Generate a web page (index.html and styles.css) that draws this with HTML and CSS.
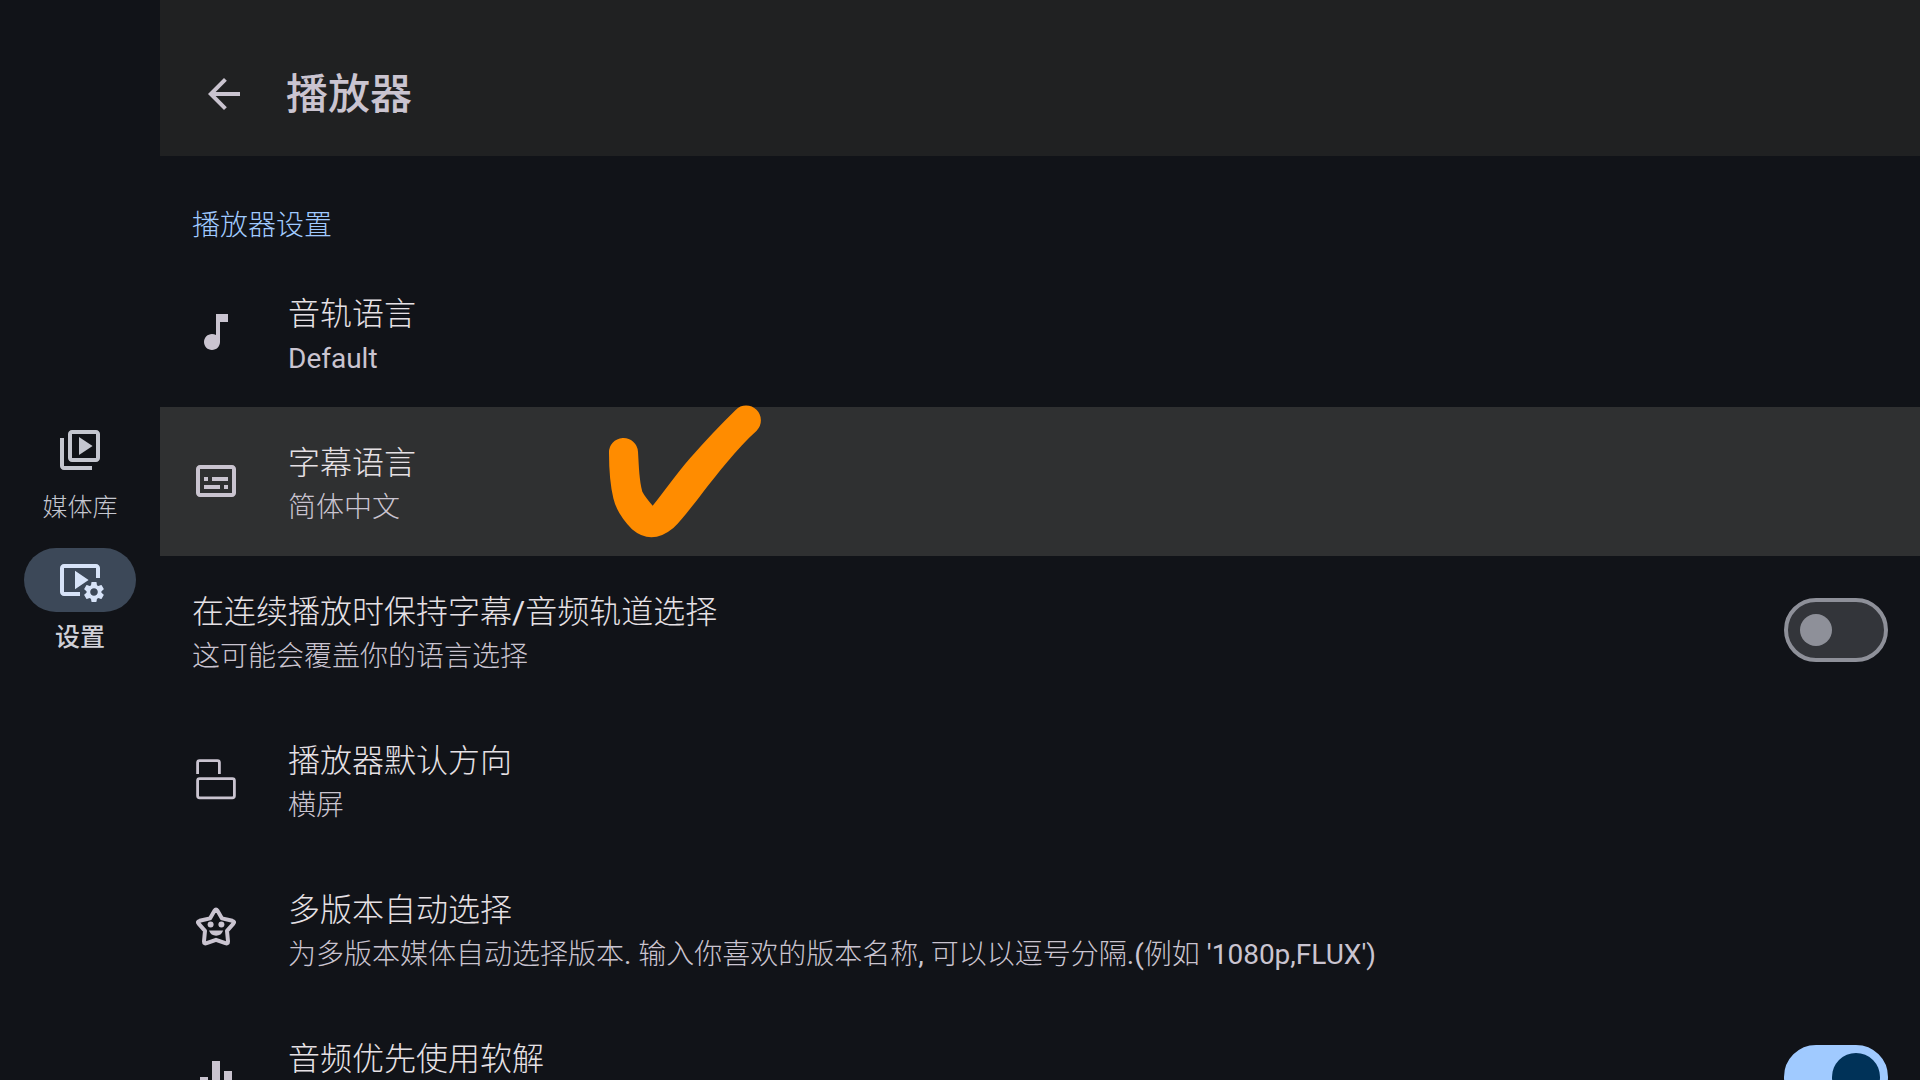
FILE: index.html
```html
<!DOCTYPE html>
<html lang="zh-CN">
<head>
    <meta charset="UTF-8">
    <meta name="viewport" content="width=device-width, initial-scale=1">
    <title>播放器</title>
    <link rel="stylesheet" href="styles.css">
</head>
<body>
<nav class="sidebar">
    <a class="nav-item" href="#library">
        <span class="nav-icon">
            <svg class="icon" viewBox="0 0 24 24"><path d="M4 6H2v14c0 1.1.9 2 2 2h14v-2H4V6zm16-4H8c-1.1 0-2 .9-2 2v12c0 1.1.9 2 2 2h12c1.1 0 2-.9 2-2V4c0-1.1-.9-2-2-2zm0 14H8V4h12v12zM11.5 5.5v9l6.8-4.5z"/></svg>
        </span>
        <span class="nav-label">媒体库</span>
    </a>
    <a class="nav-item active" href="#settings" aria-current="page">
        <span class="nav-icon">
            <svg class="icon" viewBox="0 0 24 24"><path d="M4 6h16v5h2V6c0-1.1-.9-2-2-2H4c-1.1 0-2 .9-2 2v12c0 1.1.9 2 2 2h8v-2H4V6zM16.3 12L9.5 7.4v9.2zM22.71 18.43c.03-.29.04-.58.01-.86l1.07-.85c.1-.08.12-.21.06-.32l-1.03-1.79c-.06-.11-.19-.15-.31-.11L21.23 15c-.23-.17-.48-.31-.75-.42l-.2-1.36C20.26 13.09 20.16 13 20.03 13h-2.07c-.12 0-.23.09-.25.21l-.2 1.36c-.26.11-.51.26-.74.42l-1.28-.5c-.12-.05-.25 0-.31.11l-1.03 1.79c-.06.11-.04.24.06.32l1.07.86c-.03.29-.04.58-.01.86l-1.07.85c-.1.08-.12.21-.06.32l1.03 1.79c.06.11.19.15.31.11l1.27-.5c.23.17.48.31.75.42l.2 1.36c.02.12.12.21.25.21h2.07c.12 0 .23-.09.25-.21l.2-1.36c.26-.11.51-.26.74-.42l1.28.5c.12.05.25 0 .31-.11l1.03-1.79c.06-.11.04-.24-.06-.32L22.71 18.43zM19 19.9c-1.05 0-1.9-.85-1.9-1.9s.85-1.9 1.9-1.9 1.9.85 1.9 1.9-.85 1.9-1.9 1.9z"/></svg>
        </span>
        <span class="nav-label">设置</span>
    </a>
</nav>

<main class="content">
    <header class="topbar">
        <button class="back" type="button" aria-label="返回">
            <svg class="icon" viewBox="0 0 24 24"><path d="M20 11H7.830l5.590-5.590L12 4l-8 8 8 8 1.410-1.410L7.830 13H20v-2z"/></svg>
        </button>
        <h1>播放器</h1>
    </header>

    <h2 class="section-title">播放器设置</h2>

    <button class="row" type="button">
        <svg class="icon" viewBox="0 0 24 24"><path d="M12 3v10.550c-.59-.34-1.270-.55-2-.55-2.210 0-4 1.790-4 4s1.790 4 4 4 4-1.790 4-4V7h4V3h-6z"/></svg>
        <span class="row-text">
            <span class="row-title">音轨语言</span>
            <span class="row-sub"><span class="latin">Default</span></span>
        </span>
    </button>

    <button class="row selected" type="button">
        <svg class="icon" viewBox="0 0 24 24"><path d="M20 4H4c-1.100 0-2 .9-2 2v12c0 1.100.9 2 2 2h16c1.100 0 2-.9 2-2V6c0-1.100-.9-2-2-2zm0 14H4V6h16v12zM6 10h2v2H6zM10 10h8v2h-8zM6 14h8v2H6zM16 14h2v2h-2z"/></svg>
        <span class="row-text">
            <span class="row-title">字幕语言</span>
            <span class="row-sub">简体中文</span>
        </span>
        <svg class="check" viewBox="0 0 570 480" aria-hidden="true"><path d="M57 190A43.500 43.500 0 0 1 144 185C147 235 148 270 157 305Q165 320 188 347C225 303 260 250 300 205Q370 125 437 60A42 42 0 0 1 500 122C440 175 380 255 340 305C300 357 275 390 250 414Q185 468 126 418Q80 370 70 325Q57 270 57 190Z"/></svg>
    </button>

    <label class="row">
        <span class="row-text">
            <span class="row-title">在连续播放时保持字幕<span class="latin">/</span>音频轨道选择</span>
            <span class="row-sub">这可能会覆盖你的语言选择</span>
        </span>
        <input class="switch" type="checkbox" role="switch">
    </label>

    <button class="row" type="button">
        <svg class="icon line" viewBox="0 0 24 24"><path d="M2.800 9.500V3.800q0-1 1-1h8.900q1 0 1 1v5.700"/><rect x="2.800" y="11.800" width="18.400" height="9.600" rx="1"/></svg>
        <span class="row-text">
            <span class="row-title">播放器默认方向</span>
            <span class="row-sub">横屏</span>
        </span>
    </button>

    <button class="row" type="button">
        <svg class="icon" viewBox="0 0 24 24">
            <path class="star" d="M11.300 3.300Q12 2.200 12.700 3.300L15 7.200L20.200 8.400Q21.600 8.800 20.700 9.800L17.500 13.400L18 18.700Q18 20 16.700 19.600L12 17.900L7.300 19.600Q6 20 6 18.700L6.500 13.400L3.300 9.800Q2.400 8.800 3.800 8.400L9 7.200Z"/>
            <circle cx="9.300" cy="10.300" r="1.500"/><circle cx="14.700" cy="10.300" r="1.500"/>
            <path d="M8.500 13.300h7.100q-1 2.600-3.550 2.600T8.500 13.300z"/>
        </svg>
        <span class="row-text">
            <span class="row-title">多版本自动选择</span>
            <span class="row-sub">为多版本媒体自动选择版本<span class="latin">. </span>输入你喜欢的版本名称<span class="latin">, </span>可以以逗号分隔<span class="latin">.(</span>例如<span class="latin"> '1080p,FLUX')</span></span>
        </span>
    </button>

    <label class="row">
        <svg class="icon" viewBox="0 0 24 24"><path d="M10 20h4V4h-4v16zm-6 0h4v-8H4v8zM16 9v11h4V9h-4z"/></svg>
        <span class="row-text">
            <span class="row-title">音频优先使用软解</span>
        </span>
        <input class="switch" type="checkbox" role="switch" checked>
    </label>
</main>
</body>
</html>
```

FILE: styles.css
```css
*{padding: 0;margin: 0;box-sizing: border-box;}
body{
    display: flex;
    height: 100vh;
    overflow: hidden;
    background: #111318;
    color: #e2e2e9;
    font-family: Roboto, "Noto Sans CJK SC", sans-serif;
    font-weight: 300;
}
.icon{
    width: 48px;
    height: 48px;
    flex: none;
    fill: currentColor;
}
.latin{font-weight: 400;}

/* sidebar */
.sidebar{
    display: flex;
    flex-direction: column;
    justify-content: center;
    flex: none;
    gap: 22px;
    width: 160px;
    padding-bottom: 6px;
}
.nav-item{
    display: flex;
    flex-direction: column;
    align-items: center;
    gap: 8px;
    color: #c4c6cf;
    text-decoration: none;
}
.nav-icon{
    display: flex;
    align-items: center;
    justify-content: center;
    width: 112px;
    height: 64px;
    border-radius: 32px;
}
.nav-label{
    font-size: 25px;
    line-height: 36px;
}
.nav-item.active .nav-icon{
    background: #3c4858;
    color: #d7e3f8;
}
.nav-item.active .nav-label{
    color: #d0d0d7;
    font-weight: 500;
}

/* content */
.content{
    flex: 1;
    min-width: 0;
    overflow: hidden;
}
.topbar{
    display: flex;
    align-items: center;
    gap: 38px;
    height: 156px;
    padding: 32px 40px 0;
    background: #202122;
    color: #cac4d0;
}
.back{
    display: flex;
    border: 0;
    background: none;
    color: inherit;
    cursor: pointer;
}
.topbar h1{
    padding-top: 2px;
    font-size: 42px;
    font-weight: 500;
    line-height: 56px;
}
.section-title{
    padding: 50px 32px 12px;
    color: #a0caff;
    font-size: 28px;
    font-weight: 300;
    line-height: 40px;
}
.row{
    position: relative;
    display: flex;
    align-items: center;
    gap: 48px;
    width: 100%;
    padding: 27px 32px 28px;
    border: 0;
    background: none;
    color: #cac4d0;
    font: inherit;
    text-align: left;
    cursor: pointer;
}
.row.selected{background: #2f3031;}
.row-text{
    flex: 1;
    min-width: 0;
    min-height: 94px;
    padding-top: 5px;
}
.row-title,
.row-sub{display: block;}
.row-title{
    color: #e6e1e5;
    font-size: 32px;
    line-height: 48px;
}
.row-sub{
    font-size: 28px;
    line-height: 41px;
}
.line{
    fill: none;
    stroke: currentColor;
    stroke-width: 1.4;
}
.star{
    fill: none;
    stroke: currentColor;
    stroke-width: 2;
    stroke-linejoin: round;
}

/* hand-drawn mark over the row */
.check{
    position: absolute;
    top: -17px;
    left: 430px;
    width: 190px;
    height: 160px;
    fill: #ff8c00;
}

.switch{
    display: flex;
    align-items: center;
    flex: none;
    width: 104px;
    height: 64px;
    padding: 0 12px;
    border: 4px solid #8e9099;
    border-radius: 32px;
    background: #33353a;
    appearance: none;
    cursor: pointer;
}
.switch::before{
    content: "";
    width: 32px;
    height: 32px;
    border-radius: 50%;
    background: #8e9099;
}
.switch:checked{
    justify-content: flex-end;
    padding: 0 4px;
    border-color: #a0caff;
    background: #a0caff;
}
.switch:checked::before{
    width: 48px;
    height: 48px;
    background: #003258;
}
```
